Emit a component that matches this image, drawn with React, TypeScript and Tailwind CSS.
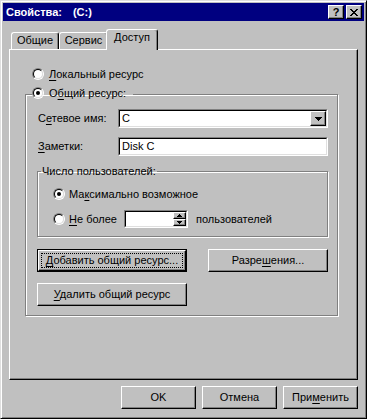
import type { ReactNode } from "react";

const raised =
  "border border-t-white border-l-white border-r-black border-b-black bg-[#c0c0c0] shadow-[inset_-1px_-1px_0_#808080]";

function Radio({ checked = false }: { checked?: boolean }) {
  return (
    <span className="block h-[12px] w-[12px] shrink-0 rounded-full border border-t-[#808080] border-l-[#808080] border-r-white border-b-white">
      <span className="flex h-full w-full items-center justify-center rounded-full border border-t-black border-l-black border-r-[#dfdfdf] border-b-[#dfdfdf] bg-white">
        {checked && <span className="block h-[4px] w-[4px] rounded-full bg-black" />}
      </span>
    </span>
  );
}

function Sunken({ className = "", children }: { className?: string; children?: ReactNode }) {
  return (
    <div className={`border border-t-[#808080] border-l-[#808080] border-r-white border-b-white ${className}`}>
      <div className="flex h-full items-center border border-t-black border-l-black border-r-[#dfdfdf] border-b-[#dfdfdf] bg-white">
        {children}
      </div>
    </div>
  );
}

function Button({ className = "", children }: { className?: string; children: ReactNode }) {
  return (
    <button className={`flex h-[23px] items-center justify-center ${raised} ${className}`}>
      {children}
    </button>
  );
}

function Arrow({ up = false, w = 7 }: { up?: boolean; w?: number }) {
  const h = Math.ceil(w / 2);
  return (
    <svg width={w} height={h} viewBox={`0 0 ${w} ${h}`} shapeRendering="crispEdges">
      {Array.from({ length: h }).map((_, i) => {
        const row = up ? h - 1 - i : i;
        return <rect key={i} x={row} y={i} width={w - row * 2} height={1} fill="black" />;
      })}
    </svg>
  );
}

function Tab({ label, active = false }: { label: string; active?: boolean }) {
  if (active) {
    return (
      <div className="relative z-10 mb-[-1px] ml-[-2px] flex h-[21px] w-[52px] justify-center rounded-t-[3px] border-t border-l border-r border-t-white border-l-white border-r-black bg-[#c0c0c0] pt-[1px] shadow-[inset_-1px_0_0_#808080]">
        {label}
      </div>
    );
  }
  return (
    <div className="flex h-[17px] justify-center rounded-t-[3px] border-t border-l border-r border-t-white border-l-white border-r-black pt-[1px] shadow-[inset_-1px_0_0_#808080]">
      {label}
    </div>
  );
}

export default function App() {
  return (
    <div className="flex h-[419px] w-[367px] flex-col border border-t-[#dfdfdf] border-l-[#dfdfdf] border-r-black border-b-black bg-[#c0c0c0] p-[2px] font-['Liberation_Sans',Arial,sans-serif] text-[11px] leading-[13px] text-black shadow-[inset_1px_1px_0_#fff,inset_-1px_-1px_0_#808080]">
      {/* title bar */}
      <div className="flex h-[18px] items-center bg-[#000080] pl-[3px] pr-[2px]">
        <span className="font-bold text-white">
          Свойства:<span className="ml-[11px]">(C:)</span>
        </span>
        <div className="ml-auto flex gap-[2px]">
          <span className={`flex h-[14px] w-[16px] items-center justify-center font-bold leading-none ${raised}`}>
            ?
          </span>
          <span className={`flex h-[14px] w-[16px] items-center justify-center ${raised}`}>
            <svg width="8" height="7" viewBox="0 0 8 7" shapeRendering="crispEdges">
              <path
                d="M0 0h2v1h-2z M6 0h2v1h-2z M1 1h2v1h-2z M5 1h2v1h-2z M2 2h4v1h-4z M3 3h2v1h-2z M2 4h4v1h-4z M1 5h2v1h-2z M5 5h2v1h-2z M0 6h2v1h-2z M6 6h2v1h-2z"
                fill="black"
              />
            </svg>
          </span>
        </div>
      </div>

      {/* tabs */}
      <div className="ml-[8px] mt-[8px] flex h-[20px] items-end">
        <div className="w-[48px]">
          <Tab label="Общие" />
        </div>
        <div className="w-[49px]">
          <Tab label="Сервис" />
        </div>
        <Tab label="Доступ" active />
      </div>

      {/* panel */}
      <div className="mx-[6px] h-[331px] border border-t-white border-l-white border-r-black border-b-black shadow-[inset_-1px_-1px_0_#808080]">
        <div className="ml-[22px] mt-[18px] flex items-start gap-[5px]">
          <Radio />
          <span>
            <u className="underline-offset-2">Л</u>окальный ресурс
          </span>
        </div>

        <fieldset className="ml-[15px] mt-[6px] w-[313px] border border-[#808080] pb-[9px] shadow-[1px_1px_0_#fff,inset_1px_1px_0_#fff]">
          <legend className="ml-[6px] h-[14px] pr-[7px]">
            <span className="flex items-start gap-[5px]">
              <Radio checked />
              <span>
                О<u className="underline-offset-2">б</u>щий ресурс:
              </span>
            </span>
          </legend>

          <div className="mt-[8px] flex items-center">
            <span className="ml-[12px] w-[80px]">
              С<u className="underline-offset-2">е</u>тевое имя:
            </span>
            <Sunken className="h-[19px] w-[210px]">
              <span className="ml-[2px]">C</span>
              <span className={`ml-auto flex h-full w-[16px] items-center justify-center ${raised}`}>
                <Arrow />
              </span>
            </Sunken>
          </div>

          <div className="mt-[9px] flex items-center">
            <span className="ml-[12px] w-[80px]">
              <u className="underline-offset-2">З</u>аметки:
            </span>
            <Sunken className="h-[19px] w-[210px]">
              <span className="ml-[2px]">Disk C</span>
            </Sunken>
          </div>

          <fieldset className="ml-[11px] mt-[9px] w-[291px] border border-[#808080] pb-[8px] shadow-[1px_1px_0_#fff,inset_1px_1px_0_#fff]">
            <legend className="ml-[3px] px-[1px]">Число пользователей:</legend>
            <div className="ml-[15px] mt-[10px] flex items-start gap-[4px]">
              <Radio checked />
              <span>
                Ма<u className="underline-offset-2">к</u>симально возможное
              </span>
            </div>
            <div className="ml-[15px] mt-[9px] flex h-[18px] items-center">
              <Radio />
              <span className="ml-[4px] w-[55px]">
                <u className="underline-offset-2">Н</u>е более
              </span>
              <Sunken className="h-[18px] w-[64px]">
                <span className="ml-auto flex h-full w-[13px] flex-col">
                  <span className={`flex h-1/2 items-center justify-center ${raised}`}>
                    <Arrow up w={5} />
                  </span>
                  <span className={`flex h-1/2 items-center justify-center ${raised}`}>
                    <Arrow w={5} />
                  </span>
                </span>
              </Sunken>
              <span className="ml-[8px]">пользователей</span>
            </div>
          </fieldset>

          <div className="ml-[11px] mt-[12px] flex">
            <button className="h-[23px] w-[150px] border border-black bg-[#c0c0c0] p-0">
              <span className="flex h-full w-full border border-t-white border-l-white border-r-black border-b-black p-[2px] shadow-[inset_-1px_-1px_0_#808080]">
                <span className="flex flex-1 items-center justify-center border border-dotted border-black">
                  <span>
                    <u className="underline-offset-2">Д</u>обавить общий ресурс...
                  </span>
                </span>
              </span>
            </button>
            <Button className="ml-[21px] w-[120px]">
              <span>
                Разре<u className="underline-offset-2">ш</u>ения...
              </span>
            </Button>
          </div>

          <div className="ml-[11px] mt-[11px] flex">
            <Button className="w-[150px]">
              <span>
                <u className="underline-offset-2">У</u>далить общий ресурс
              </span>
            </Button>
          </div>
        </fieldset>
      </div>

      {/* dialog buttons */}
      <div className="mt-[6px] flex justify-end gap-[6px] pr-[6px]">
        <Button className="w-[75px]">OK</Button>
        <Button className="w-[75px]">Отмена</Button>
        <Button className="w-[75px]">
          <span>
            При<u className="underline-offset-2">м</u>енить
          </span>
        </Button>
      </div>
    </div>
  );
}
